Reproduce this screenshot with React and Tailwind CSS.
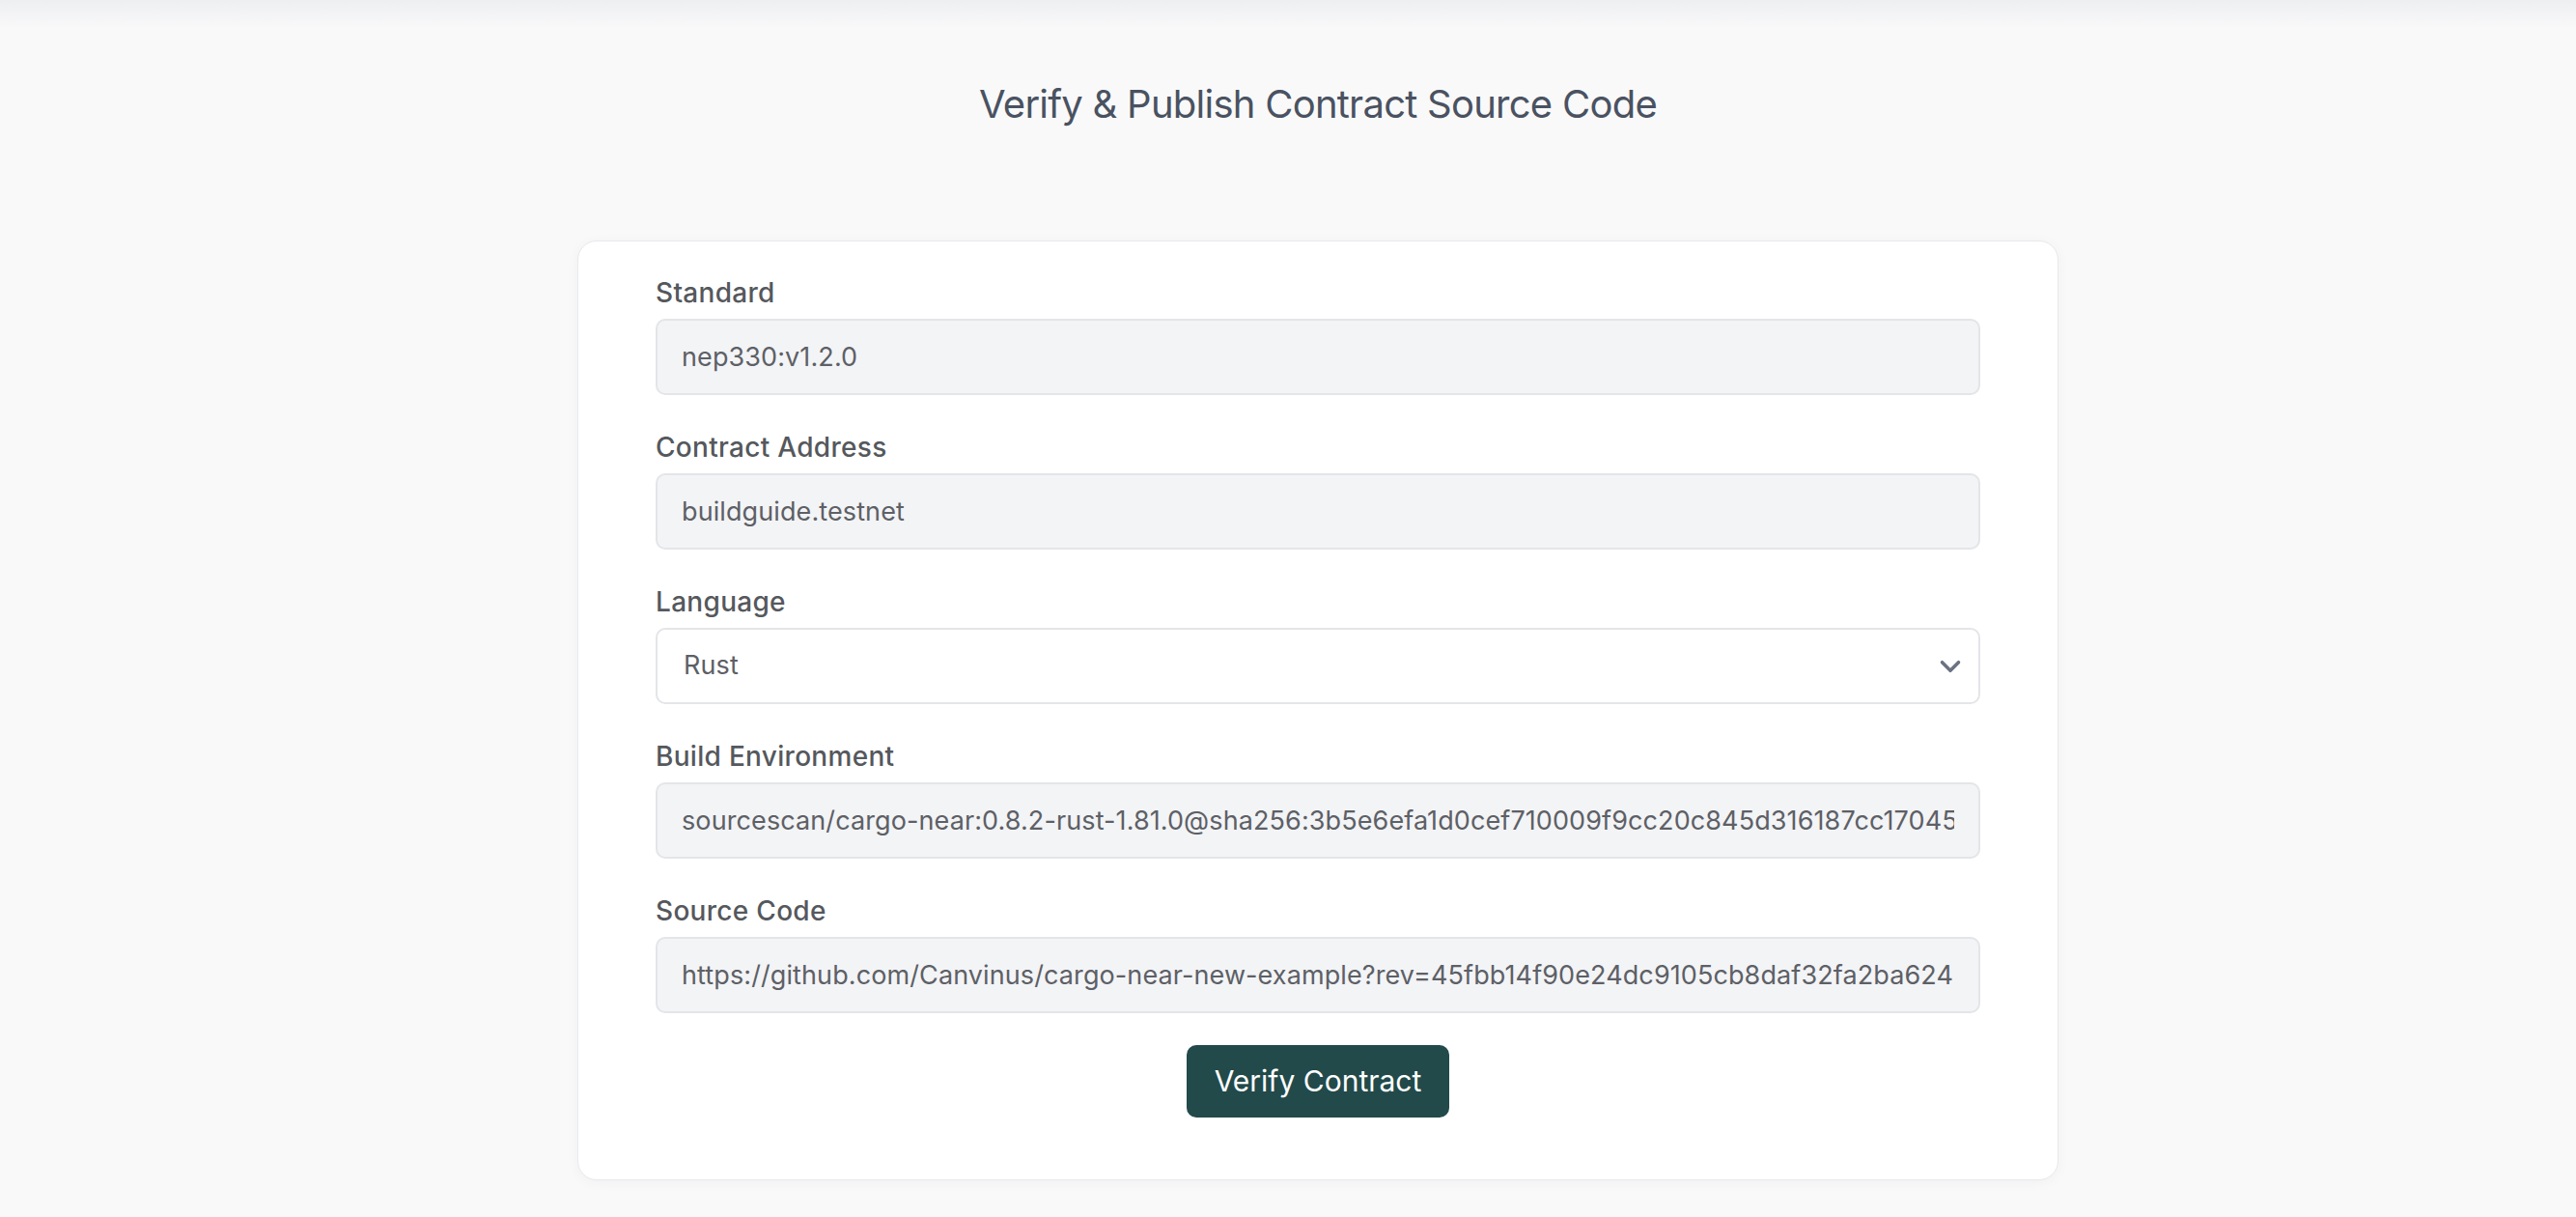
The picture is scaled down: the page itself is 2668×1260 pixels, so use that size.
import React from "react";
import { ChevronDown } from "lucide-react";

const fields = [
  { label: "Standard", value: "nep330:v1.2.0" },
  { label: "Contract Address", value: "buildguide.testnet" },
  { label: "Language", value: "Rust", select: true },
  {
    label: "Build Environment",
    value:
      "sourcescan/cargo-near:0.8.2-rust-1.81.0@sha256:3b5e6efa1d0cef710009f9cc20c845d316187cc170455",
  },
  {
    label: "Source Code",
    value:
      "https://github.com/Canvinus/cargo-near-new-example?rev=45fbb14f90e24dc9105cb8daf32fa2ba624",
  },
];

export default function App() {
  return (
    <div
      className="min-h-[1260px] bg-[#f9f9fa] text-[#4b5563]"
      style={{ fontFamily: "Inter, 'Noto Sans', sans-serif" }}
    >
      <div className="h-[30px] bg-gradient-to-b from-[#eeeff1] to-[#f9f9fa]" />
      <div className="pl-[62px]">
        <h1 className="mt-[51px] text-center text-[40px] leading-[54px] font-normal text-[#4a5261] tracking-[-0.75px]">
          Verify &amp; Publish Contract Source Code
        </h1>
        <div className="mx-auto mt-[114px] w-[1534px] rounded-[20px] border border-[#e8e9ec] bg-white px-[80px] pt-[33px] pb-[64px] shadow-[0_2px_14px_rgba(0,0,0,0.04)]">
          <div className="flex flex-col gap-[34px]">
            {fields.map((f) => (
              <div key={f.label} className="flex flex-col gap-[7px]">
                <label className="text-[28px] leading-[40px] font-medium text-[#55585d] tracking-[0.3px]">
                  {f.label}
                </label>
                {f.select ? (
                  <div className="flex h-[79px] items-center justify-between rounded-[10px] border-2 border-[#e4e5e9] bg-white pl-[27px] pr-[12px] text-[27px] tracking-[0.1px] text-[#5d6066]">
                    <span>{f.value}</span>
                    <ChevronDown size={34} strokeWidth={2.5} className="text-[#6b7280]" />
                  </div>
                ) : (
                  <input
                    readOnly
                    value={f.value}
                    className="h-[79px] w-full rounded-[10px] border-2 border-[#e4e5e9] bg-[#f3f4f6] px-[25px] text-[27px] tracking-[0.1px] text-[#5d6066] outline-none"
                    style={{ fontFamily: "Inter, 'Noto Sans', sans-serif" }}
                  />
                )}
              </div>
            ))}
          </div>
          <button className="mx-auto mt-[33px] flex h-[75px] items-center rounded-[10px] bg-[#224a4a] px-[29px] text-[30px] font-normal text-white">
            Verify Contract
          </button>
        </div>
      </div>
    </div>
  );
}
